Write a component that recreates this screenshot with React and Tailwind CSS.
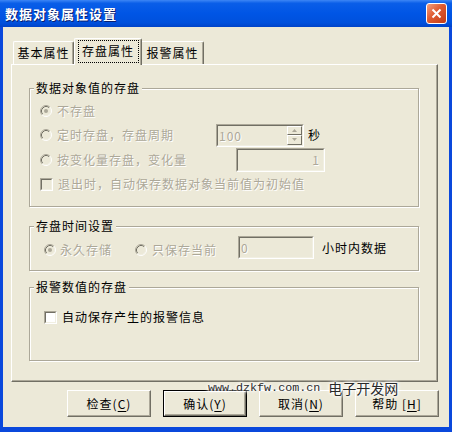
import React from 'react';

const dis = "text-[#ACA899] [text-shadow:1px_1px_0_#fff]";

const Radio = ({ checked, disabled }) => (
  <svg width="12" height="12" viewBox="0 0 12 12" className="shrink-0">
    <circle cx="6" cy="6" r="5" fill={disabled ? '#ECE9D8' : '#fff'} />
    <path d="M2.11 9.89 A5.5 5.5 0 0 1 9.89 2.11" stroke="#ACA899" fill="none" />
    <path d="M9.89 2.11 A5.5 5.5 0 0 1 2.11 9.89" stroke="#fff" fill="none" />
    <path d="M2.82 9.18 A4.5 4.5 0 0 1 9.18 2.82" stroke="#716F64" fill="none" />
    <path d="M9.18 2.82 A4.5 4.5 0 0 1 2.82 9.18" stroke="#F1EFE2" fill="none" />
    {checked && <circle cx="6" cy="6" r="2" fill={disabled ? '#ACA899' : '#000'} />}
  </svg>
);

const Check = ({ disabled }) => (
  <span className="block shrink-0 w-[13px] h-[13px] border border-t-[#ACA899] border-l-[#ACA899] border-b-white border-r-white">
    <span className={`block w-full h-full border border-t-[#716F64] border-l-[#716F64] border-b-[#F1EFE2] border-r-[#F1EFE2] ${disabled ? 'bg-[#ECE9D8]' : 'bg-white'}`}></span>
  </span>
);

const Sunken = ({ className, children }) => (
  <div className={`border border-t-[#ACA899] border-l-[#ACA899] border-b-white border-r-white ${className}`}>
    <div className="h-full border border-t-[#716F64] border-l-[#716F64] border-b-[#F1EFE2] border-r-[#F1EFE2] flex">
      {children}
    </div>
  </div>
);

const SpinBtn = ({ up }) => (
  <div className="flex-1 flex items-center justify-center bg-[#ECE9D8] border border-t-white border-l-white border-b-[#716F64] border-r-[#716F64]">
    <svg width="5" height="3" viewBox="0 0 5 3">
      <path d={up ? "M0 3 L2.5 0 L5 3 Z" : "M0 0 L2.5 3 L5 0 Z"} fill="#ACA899" />
    </svg>
  </div>
);

const Group = ({ label, className, children }) => (
  <div className={`relative w-[390px] border border-[#ACA899] shadow-[1px_1px_0_#fff,inset_1px_1px_0_#fff] ${className}`}>
    <span className="absolute -top-[9px] left-[4px] px-[2px] bg-[#ECE9D8] leading-[16px] text-black">{label}</span>
    {children}
  </div>
);

const Btn = ({ label, keyChar, open = '(', close = ')', primary }) => (
  <div className={`w-[84px] h-[27px] ${primary ? 'border border-black' : ''}`}>
    <div className="h-full flex items-center justify-center border border-t-white border-l-white border-r-[#716F64] border-b-[#716F64] shadow-[inset_-1px_-1px_0_#ACA899] leading-[16px]">
      {label}{open}<span className="underline underline-offset-2">{keyChar}</span>{close}
    </div>
  </div>
);

export default function App() {
  return (
    <div className="relative w-[452px] h-[432px] bg-[#0a48dc] flex flex-col font-['Noto_Sans_CJK_SC',sans-serif] text-[12px] tracking-[1px] text-black">
      {/* title bar */}
      <div className="h-[27px] shrink-0 flex items-center justify-between pl-[5px] pr-[5px] bg-[linear-gradient(#3d86f5,#0a5ee8_12%,#0055e5_50%,#0050dc_85%,#0043c8)]">
        <span className="text-white font-bold text-[13px] leading-[16px] [text-shadow:1px_1px_0_#0a1e6e]">数据对象属性设置</span>
        <div className="w-[21px] h-[21px] rounded-[3px] border border-white bg-[linear-gradient(135deg,#f3a080,#df5a30_45%,#c23c16)] flex items-center justify-center">
          <svg width="11" height="11" viewBox="0 0 11 11">
            <path d="M1.5 1.5 L9.5 9.5 M9.5 1.5 L1.5 9.5" stroke="#fff" strokeWidth="2" />
          </svg>
        </div>
      </div>

      {/* body */}
      <div className="flex-1 mx-[3px] mb-[5px] bg-[#ECE9D8] flex flex-col">
        <div className="ml-[8px] mt-[11px] w-[427px]">
          {/* tabs */}
          <div className="relative z-10 flex items-end h-[26px] pl-[2px]">
            <div className="w-[61px] h-[23px] flex items-center justify-center border-l border-t border-white border-r border-r-[#716F64] shadow-[inset_-1px_0_0_#ACA899] rounded-tl-[2px] rounded-tr-[2px]">基本属性</div>
            <div className="relative w-[68px] h-[27px] -mb-px bg-[#ECE9D8] flex items-center justify-center pb-[3px] border-l border-t border-white border-r border-r-[#716F64] shadow-[inset_-1px_0_0_#ACA899] rounded-tl-[2px] rounded-tr-[2px]">
              <span className="absolute top-[1px] left-[3px] right-[2px] bottom-[2px] border border-dotted border-black"></span>
              存盘属性
            </div>
            <div className="w-[62px] h-[23px] flex items-center justify-center border-t border-white border-r border-r-[#716F64] shadow-[inset_-1px_0_0_#ACA899] rounded-tr-[2px]">报警属性</div>
          </div>

          {/* panel */}
          <div className="h-[318px] border border-t-white border-l-white border-r-[#716F64] border-b-[#716F64] shadow-[inset_-1px_-1px_0_#ACA899] pl-[17px] flex flex-col">
            <Group label="数据对象值的存盘" className="mt-[23px] h-[119px] pt-[10px] pl-[10px]">
              <div className={`h-[24px] flex items-center gap-[5px] ${dis}`}>
                <Radio checked disabled />
                <span>不存盘</span>
              </div>
              <div className="h-[24px] flex items-center">
                <div className={`w-[176px] flex items-center gap-[5px] ${dis}`}>
                  <Radio disabled />
                  <span>定时存盘，存盘周期</span>
                </div>
                <Sunken className="w-[88px] h-[23px]">
                  <span className={`flex-1 pl-[1px] leading-[19px] ${dis}`}>100</span>
                  <div className="w-[15px] flex flex-col">
                    <SpinBtn up />
                    <SpinBtn />
                  </div>
                </Sunken>
                <span className="ml-[4px]">秒</span>
              </div>
              <div className="h-[25px] flex items-center">
                <div className={`w-[196px] flex items-center gap-[5px] ${dis}`}>
                  <Radio disabled />
                  <span>按变化量存盘，变化量</span>
                </div>
                <Sunken className="w-[89px] h-[24px]">
                  <span className={`flex-1 text-right pr-[3px] leading-[20px] ${dis}`}>1</span>
                </Sunken>
              </div>
              <div className={`h-[24px] flex items-center gap-[5px] ${dis}`}>
                <Check disabled />
                <span>退出时，自动保存数据对象当前值为初始值</span>
              </div>
            </Group>

            <Group label="存盘时间设置" className="mt-[19px] h-[45px] pt-[9px] pl-[14px]">
              <div className="h-[23px] flex items-center">
                <div className={`w-[91px] mt-[5px] flex items-center gap-[4px] ${dis}`}>
                  <Radio checked disabled />
                  <span>永久存储</span>
                </div>
                <div className={`w-[103px] mt-[5px] flex items-center gap-[5px] ${dis}`}>
                  <Radio disabled />
                  <span>只保存当前</span>
                </div>
                <Sunken className="w-[76px] h-[23px]">
                  <span className={`flex-1 pl-[1px] leading-[19px] ${dis}`}>0</span>
                </Sunken>
                <span className="ml-[8px]">小时内数据</span>
              </div>
            </Group>

            <Group label="报警数值的存盘" className="mt-[16px] h-[74px] pt-[19px] pl-[14px]">
              <div className="h-[20px] flex items-center gap-[5px]">
                <Check />
                <span>自动保存产生的报警信息</span>
              </div>
            </Group>
          </div>
        </div>

        {/* buttons */}
        <div className="ml-[64px] mt-[8px] flex gap-[12px]">
          <Btn label="检查" keyChar="C" />
          <Btn label="确认" keyChar="Y" primary />
          <Btn label="取消" keyChar="N" />
          <Btn label="帮助" keyChar="H" open=" [" close="]" />
        </div>
      </div>

      {/* watermark */}
      <div className="absolute left-[208px] top-[381px] flex items-center gap-[8px] text-[#2a2a2a] tracking-normal [text-shadow:0_0_2px_#fff,0_0_3px_#fff,0_0_4px_#fff,0_0_5px_#fff]">
        <span className="font-['Liberation_Mono',monospace] text-[11.7px] leading-[14px]">www.dzkfw.com.cn</span>
        <span className="text-[14px] leading-[14px]">电子开发网</span>
      </div>
    </div>
  );
}
